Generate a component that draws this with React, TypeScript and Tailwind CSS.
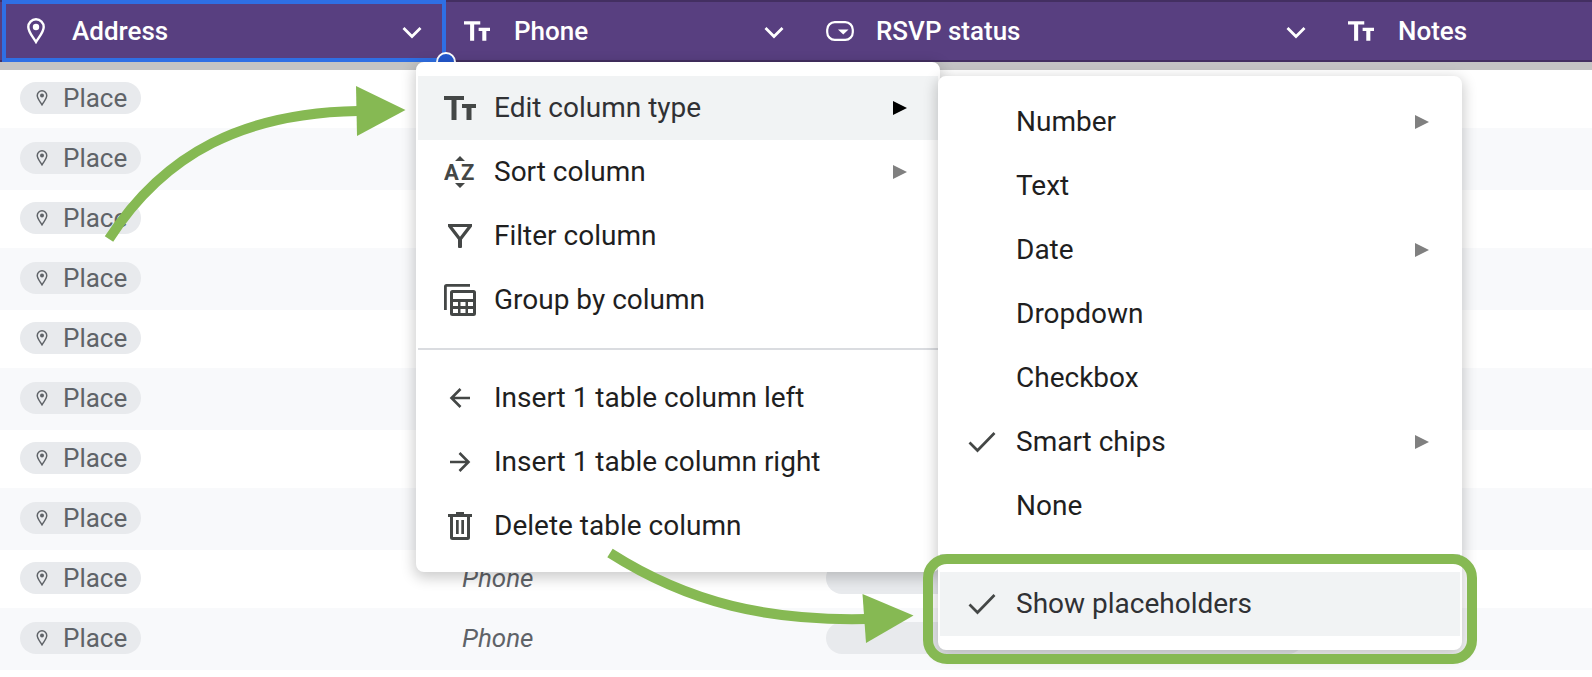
import type { ReactNode } from "react";

type IconProps = { className?: string };

function TextIcon({ className }: IconProps) {
  return (
    <svg viewBox="0 0 32 24" fill="currentColor" className={className} aria-hidden="true">
      <path d="M0 0h20v4h-7.500v20h-5V4H0zM18 8h14v4h-4.500v12h-5V12H18z" />
    </svg>
  );
}

function PinIcon({ className }: IconProps) {
  return (
    <svg viewBox="0 0 18 26" fill="none" className={className} aria-hidden="true">
      <path
        d="M9 1.300C4.600 1.300 1.300 4.700 1.300 9c0 5.100 4.500 9.600 7.700 15 3.200-5.400 7.700-9.900 7.700-15 0-4.300-3.300-7.700-7.700-7.700z"
        stroke="currentColor"
        strokeWidth="2.400"
      />
      <circle cx="9" cy="9" r="3.200" fill="currentColor" />
    </svg>
  );
}

function DropdownIcon({ className }: IconProps) {
  return (
    <svg viewBox="0 0 28 20" fill="none" className={className} aria-hidden="true">
      <rect x="1.200" y="1.200" width="25.600" height="17.600" rx="7.500" stroke="currentColor" strokeWidth="2.200" />
      <path d="M12 8.500h10.500l-5.250 5z" fill="currentColor" />
    </svg>
  );
}

function ChevronIcon({ className }: IconProps) {
  return (
    <svg viewBox="0 0 20 14" fill="none" className={className} aria-hidden="true">
      <path d="M1.500 2l8.500 8.500L18.500 2" stroke="currentColor" strokeWidth="2.800" />
    </svg>
  );
}

function SortIcon() {
  return (
    <svg viewBox="0 0 32 32" fill="currentColor" className="size-8" aria-hidden="true">
      <path d="M11 5l5-5 5 5zM11 27h10l-5 5z" />
      <text x="0" y="24" className="font-[Roboto] text-[22px] font-bold">A</text>
      <text x="17" y="24" className="font-[Roboto] text-[22px] font-bold">Z</text>
    </svg>
  );
}

function FilterIcon() {
  return (
    <svg viewBox="0 0 32 32" fill="currentColor" className="size-8" aria-hidden="true">
      <path
        fillRule="evenodd"
        d="M4 4h24v2.500L18 19.500V27a1 1 0 0 1-1 1h-2a1 1 0 0 1-1-1v-7.500L4 6.500zM8.500 7L16 16.800 23.500 7z"
      />
    </svg>
  );
}

function GroupIcon() {
  return (
    <svg viewBox="0 0 32 32" fill="currentColor" className="size-8" aria-hidden="true">
      <path d="M0 26V2.500A2.500 2.500 0 0 1 2.500 0H26v2.800H2.800V26z" />
      <path
        fillRule="evenodd"
        d="M8.500 6h21A2.500 2.500 0 0 1 32 8.500v21a2.500 2.500 0 0 1-2.500 2.500h-21A2.500 2.500 0 0 1 6 29.500v-21A2.500 2.500 0 0 1 8.500 6zM9 9v6h20V9zM9 18v4h5v-4zM16.500 18v4h5v-4zM24 18v4h5v-4zM9 25v4h5v-4zM16.500 25v4h5v-4zM24 25v4h5v-4z"
      />
    </svg>
  );
}

function ArrowIcon({ right = false }: { right?: boolean }) {
  return (
    <svg viewBox="0 0 32 32" fill="none" className="size-8" aria-hidden="true">
      <path
        d={right ? "M6 16h18M15.500 7l9 9-9 9" : "M26 16H8M16.500 7l-9 9 9 9"}
        stroke="currentColor"
        strokeWidth="2.600"
      />
    </svg>
  );
}

function TrashIcon() {
  return (
    <svg viewBox="0 0 32 32" fill="currentColor" className="size-8" aria-hidden="true">
      <path d="M4 4h8V2h8v2h8v3H4z" />
      <path
        fillRule="evenodd"
        d="M6 6h20v21.500a2.500 2.500 0 0 1-2.500 2.500h-15A2.500 2.500 0 0 1 6 27.500zM9 7v20h14V7z"
      />
      <path d="M12 10h2.700v14H12zM17.300 10H20v14h-2.700z" />
    </svg>
  );
}

function CheckIcon() {
  return (
    <svg viewBox="0 0 28 24" fill="none" className="h-6 w-7" aria-hidden="true">
      <path d="M1.500 12.500l8 8L26.500 3" stroke="currentColor" strokeWidth="2.700" />
    </svg>
  );
}

function SubmenuArrow({ className }: IconProps) {
  return (
    <svg viewBox="0 0 14 14" fill="currentColor" className={className} aria-hidden="true">
      <path d="M0 0l14 7-14 7z" />
    </svg>
  );
}

type Column = { label: string; icon: ReactNode; width: string; selected?: boolean; menu?: boolean };

const columns: Column[] = [
  { label: "Address", icon: <PinIcon className="h-[26px] w-[18px]" />, width: "w-[444px]", selected: true, menu: true },
  { label: "Phone", icon: <TextIcon className="h-5 w-[26px]" />, width: "w-[362px]", menu: true },
  { label: "RSVP status", icon: <DropdownIcon className="h-5 w-7" />, width: "w-[522px]", menu: true },
  { label: "Notes", icon: <TextIcon className="h-5 w-[26px]" />, width: "w-auto" },
];

const rows = ["", "", "", "", "", "", "", "", "Phone", "Phone"];

function HeaderCell({ label, icon, width, selected, menu }: Column) {
  return (
    <th scope="col" className={`relative h-[62px] border-y-2 border-[#432f61] bg-[#583f80] p-0 font-medium ${width}`}>
      <div className="flex items-center pr-[22px] pl-5">
        <span className={`flex ${selected ? "w-[52px] pl-[7px]" : "w-[50px]"}`}>{icon}</span>
        <span className="text-[26px] leading-8">{label}</span>
        {menu && (
          <button type="button" aria-label={`${label} column menu`} className="mt-1 ml-auto">
            <ChevronIcon className="h-[14px] w-5" />
          </button>
        )}
      </div>
      {selected && (
        <div className="absolute -top-[2px] -right-[2px] -bottom-[2px] left-[2px] z-10 border-4 border-[#2f6fe4]">
          <span className="absolute -right-[14px] -bottom-[14px] size-5 rounded-full border-2 border-white bg-[#2358cf]" />
        </div>
      )}
    </th>
  );
}

type Item = { label: string; icon?: ReactNode; submenu?: boolean; active?: boolean; role?: "menuitemradio" | "menuitemcheckbox" };

function MenuItem({ label, icon, submenu, active, role }: Item) {
  return (
    <button
      type="button"
      role={role ?? "menuitem"}
      aria-checked={role ? Boolean(icon) : undefined}
      aria-haspopup={submenu ? "menu" : undefined}
      className={`flex h-16 w-full items-center pr-[31px] text-left ${active ? "bg-[#f1f3f4] text-[#303134]" : "text-[#1f1f1f]"} ${role ? "pl-7" : "pl-[26px]"}`}
    >
      <span className={`flex text-[#444746] ${role ? "w-12" : "w-[50px]"}`}>{icon}</span>
      <span className="flex-1 leading-8">{label}</span>
      {submenu && <SubmenuArrow className={`size-[14px] ${active ? "text-black" : "text-[#808080]"}`} />}
    </button>
  );
}

const Divider = () => <hr className="my-4 border-t-2 border-[#dadce0]" />;

export default function App() {
  return (
    <main className="relative min-h-screen overflow-hidden bg-white font-[Roboto,sans-serif]">
      <table className="w-full table-fixed border-separate border-spacing-0 text-left">
        <thead className="text-white">
          <tr>
            {columns.map((column) => (
              <HeaderCell key={column.label} {...column} />
            ))}
          </tr>
        </thead>
        <tbody className="text-[26px] leading-8 text-[#5f6368]">
          <tr aria-hidden="true">
            <td colSpan={4} className="h-2 bg-[#c4c4c4] p-0" />
          </tr>
          {rows.map((phone, row) => (
            <tr key={row} className={row % 2 ? "h-[62px] bg-[#f8f9fb]" : "h-[58px] bg-white"}>
              <td className={`pr-0 pl-5 align-top ${row % 2 ? "pt-[14px]" : "pt-3"} pb-0`}>
                <span className="flex h-8 w-fit items-center rounded-full bg-[#e8eaed] pr-[14px] pl-4">
                  <PinIcon className="mr-[15px] h-4 w-3" />
                  Place
                </span>
              </td>
              <td className={`pl-[18px] align-top italic ${row % 2 ? "pt-[14px]" : "pt-3"} pb-0`}>{phone}</td>
              <td className={`pr-6 pl-5 align-top ${row % 2 ? "pt-[14px]" : "pt-3"} pb-0`}>
                <span className="block h-8 rounded-full bg-[#e8eaed]" />
              </td>
              <td />
            </tr>
          ))}
        </tbody>
      </table>

      <div
        role="menu"
        aria-label="Address column"
        className="absolute top-[62px] left-[416px] z-20 w-[524px] rounded-lg border-2 border-white bg-white py-3 text-[28px] shadow-[0_4px_14px_2px_rgba(0,0,0,0.2)]"
      >
        <MenuItem label="Edit column type" icon={<TextIcon className="h-6 w-8" />} submenu active />
        <MenuItem label="Sort column" icon={<SortIcon />} submenu />
        <MenuItem label="Filter column" icon={<FilterIcon />} />
        <MenuItem label="Group by column" icon={<GroupIcon />} />
        <Divider />
        <MenuItem label="Insert 1 table column left" icon={<ArrowIcon />} />
        <MenuItem label="Insert 1 table column right" icon={<ArrowIcon right />} />
        <MenuItem label="Delete table column" icon={<TrashIcon />} />
      </div>

      <div
        role="menu"
        aria-label="Column type"
        className="absolute top-[76px] left-[938px] z-30 w-[524px] rounded-lg border-2 border-white bg-white py-3 text-[28px] shadow-[0_4px_14px_2px_rgba(0,0,0,0.2)]"
      >
        <MenuItem label="Number" role="menuitemradio" submenu />
        <MenuItem label="Text" role="menuitemradio" />
        <MenuItem label="Date" role="menuitemradio" submenu />
        <MenuItem label="Dropdown" role="menuitemradio" />
        <MenuItem label="Checkbox" role="menuitemradio" />
        <MenuItem label="Smart chips" role="menuitemradio" icon={<CheckIcon />} submenu />
        <MenuItem label="None" role="menuitemradio" />
        <Divider />
        <MenuItem label="Show placeholders" role="menuitemcheckbox" icon={<CheckIcon />} active />
      </div>

      <div className="pointer-events-none absolute top-[554px] left-[923px] z-40 h-[110px] w-[554px] rounded-3xl border-[10px] border-[#86b953]" />

      <svg className="pointer-events-none absolute inset-0 z-40 size-full" fill="none" aria-hidden="true">
        <path d="M109 239C165 152 245 113 358 111" stroke="#86b953" strokeWidth="10" />
        <path d="M356 86l49.500 24L357 136z" fill="#86b953" />
        <path d="M610 553C690 604 770 621 866 619" stroke="#86b953" strokeWidth="10" />
        <path d="M862.500 594l51 21.500L866 643z" fill="#86b953" />
      </svg>
    </main>
  );
}
